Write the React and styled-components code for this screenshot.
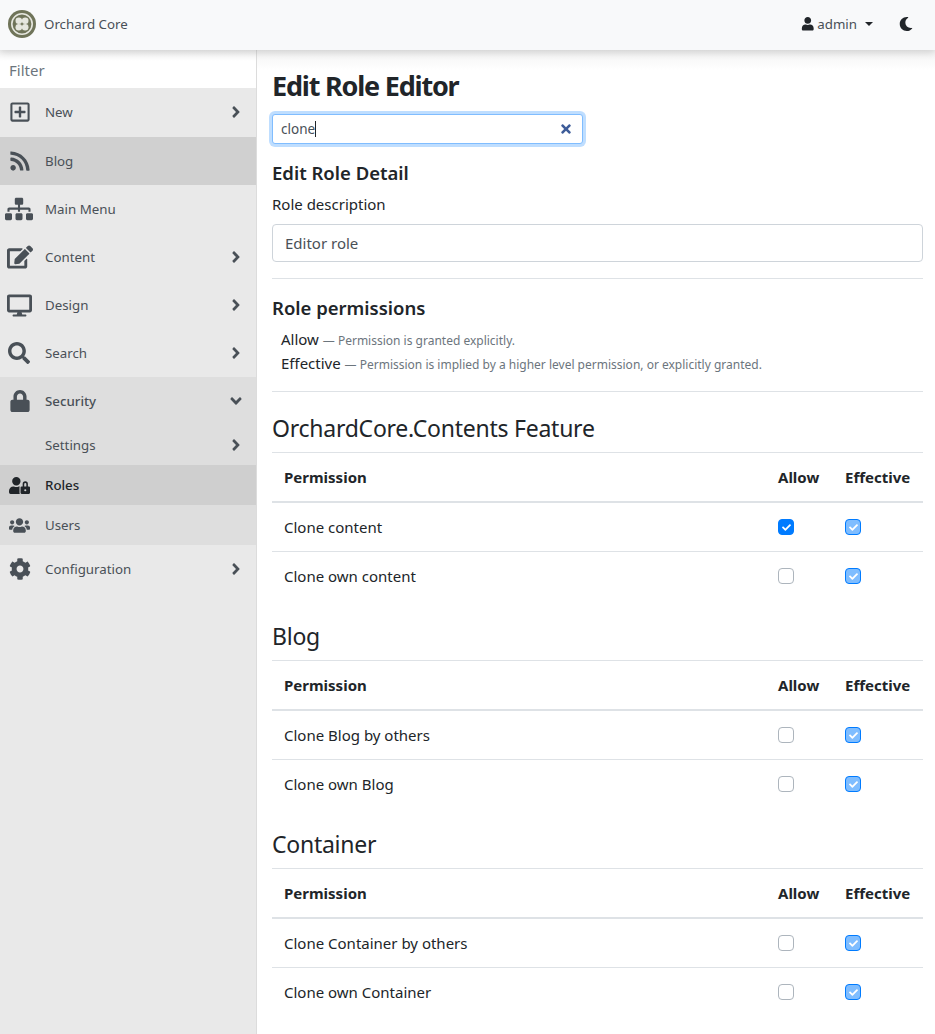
import React from "react";
import styled, { createGlobalStyle } from "styled-components";
import {
  FaRegPlusSquare, FaRss, FaSitemap, FaEdit, FaDesktop, FaSearch, FaLock,
  FaUserLock, FaUsers, FaCog, FaAngleRight, FaAngleDown, FaUser, FaMoon, FaTimes, FaCheck,
} from "react-icons/fa";

const font = `"Noto Sans", "Open Sans", "Liberation Sans", sans-serif`;

const Global = createGlobalStyle`
  html, body { margin: 0; padding: 0; background: #fff; }
  body { font-family: ${font}; color: #212529; font-size: 16px; }
  * { box-sizing: border-box; }
`;

const Page = styled.div`
  width: 935px;
  height: 1034px;
  display: flex;
  flex-direction: column;
  overflow: hidden;
`;

const Navbar = styled.header`
  height: 50px;
  flex: none;
  display: flex;
  align-items: center;
  padding: 0 22px 2px 8px;
  background: #f8f9fa;
  box-shadow: 0 2px 8px rgba(0, 0, 0, 0.16);
  position: relative;
  z-index: 2;
`;

const Brand = styled.div`
  display: flex;
  align-items: center;
  gap: 8px;
  font-size: 13.3px;
  color: #495057;
`;

const NavRight = styled.div`
  margin-left: auto;
  display: flex;
  align-items: center;
  font-size: 13.3px;
  color: #495057;
`;

const UserMenu = styled.div`
  display: flex;
  align-items: center;
  gap: 3px;
  color: #495057;
  svg { color: #212529; font-size: 13.5px; }
`;

const Caret = styled.span`
  width: 0;
  height: 0;
  margin-left: 8px;
  border-top: 4.5px solid #212529;
  border-left: 4.5px solid transparent;
  border-right: 4.5px solid transparent;
`;

const Moon = styled(FaMoon)`
  margin-left: 26px;
  font-size: 14px;
  color: #212529;
`;

const Body = styled.div`
  flex: 1;
  display: flex;
  min-height: 0;
`;

const Sidebar = styled.aside`
  width: 257px;
  flex: none;
  background: #e9e9e9;
  border-right: 1px solid #dcdcdc;
  display: flex;
  flex-direction: column;
`;

const Filter = styled.div`
  height: 38px;
  flex: none;
  padding: 2px 9px 0;
  display: flex;
  align-items: center;
  font-size: 15px;
  color: #6c757d;
  background: linear-gradient(#f3f3f3, #fff 30%);
`;

const Item = styled.div`
  height: ${(p) => p.$h || 48}px;
  flex: none;
  display: flex;
  align-items: center;
  padding-left: ${(p) => (p.$sub ? 45 : 0)}px;
  padding-right: 11px;
  padding-bottom: ${(p) => p.$lift || 0}px;
  font-size: 13.3px;
  color: ${(p) => (p.$dark ? "#212529" : "#495057")};
  font-weight: ${(p) => (p.$semi ? 500 : 400)};
  background: ${(p) => p.$bg || "transparent"};
`;

const IconSlot = styled.span`
  width: 45px;
  flex: none;
  display: flex;
  padding-left: ${(p) => (p.$left ?? 8)}px;
  color: ${(p) => (p.$dark ? "#212529" : "#495057")};
  font-size: ${(p) => p.$size || 22}px;
`;

const Chevron = styled.span`
  margin-left: auto;
  display: flex;
  color: #495057;
  font-size: 18px;
`;

const Group = styled.div`
  background: #dedede;
  display: flex;
  flex-direction: column;
`;

const Main = styled.main`
  flex: 1;
  padding: 15px 12px 0 15px;
  min-width: 0;
  background: linear-gradient(#f3f3f3, #fff 20px);
`;

const Title = styled.h1`
  margin: 0;
  font-size: 27px;
  line-height: 42px;
  font-weight: 700;
  letter-spacing: -1.2px;
  color: #212529;
`;

const SearchBox = styled.div`
  width: 311px;
  height: 30px;
  margin-top: 7px;
  padding: 0 9.5px 0 8px;
  display: flex;
  align-items: center;
  font-size: 13.5px;
  color: #495057;
  background: #fff;
  border: 1px solid #80bdff;
  border-radius: 3px;
  box-shadow: 0 0 0 3px rgba(0, 123, 255, 0.25);
`;

const Cursor = styled.span`
  width: 1px;
  height: 16px;
  background: #212529;
`;

const Clear = styled(FaTimes)`
  margin-left: auto;
  font-size: 14px;
  color: #3d5c99;
`;

const SubHead = styled.h2`
  margin: ${(p) => p.$top}px 0 0;
  font-size: 18.5px;
  line-height: 24px;
  font-weight: 600;
  color: #212529;
`;

const Label = styled.label`
  display: block;
  margin-top: 8px;
  font-size: 15px;
  line-height: 22px;
  color: #212529;
`;

const TextBox = styled.div`
  height: 38px;
  margin-top: 9px;
  padding: 0 12px;
  display: flex;
  align-items: center;
  font-size: 15px;
  color: #495057;
  border: 1px solid #ced4da;
  border-radius: 4px;
`;

const Rule = styled.hr`
  margin: ${(p) => p.$top}px 0 0;
  border: 0;
  border-top: 1px solid #dee2e6;
`;

const Legend = styled.div`
  margin-top: ${(p) => p.$top}px;
  padding-left: 9px;
`;

const LegendLine = styled.div`
  height: 24px;
  line-height: 24px;
  font-size: 15px;
  color: #212529;
  white-space: nowrap;
`;

const Hint = styled.span`
  font-size: 12px;
  color: #6c757d;
`;

const SectionTitle = styled.h3`
  margin: ${(p) => p.$top}px 0 0;
  font-size: 23px;
  line-height: 32px;
  font-weight: 400;
  letter-spacing: -0.25px;
  color: #212529;
`;

const Table = styled.div`
  margin-top: 8px;
  border-top: 1px solid #dee2e6;
`;

const Row = styled.div`
  display: grid;
  grid-template-columns: 1fr 67px 90px;
  align-items: center;
  height: ${(p) => (p.$head ? 50 : 49)}px;
  padding-left: 12px;
  font-size: 15px;
  font-weight: ${(p) => (p.$head ? 700 : 400)};
  color: #212529;
  border-bottom: ${(p) => (p.$head ? "2px" : "1px")} solid ${(p) => (p.$last ? "transparent" : "#dee2e6")};
`;

const Cell = styled.div`
  padding-left: 12px;
  display: flex;
`;

const Check = styled.span`
  width: 16px;
  height: 16px;
  display: flex;
  align-items: center;
  justify-content: center;
  border-radius: 4px;
  border: 1px solid ${(p) => (p.$kind === "off" ? "#adb5bd" : "#007bff")};
  background: ${(p) => (p.$kind === "on" ? "#007bff" : p.$kind === "off" ? "#fff" : "#7fbdff")};
  color: #fff;
  font-size: 9px;
`;

const Logo = () => (
  <svg width="28" height="28" viewBox="0 0 28 28">
    <circle cx="14" cy="14" r="14" fill="#6f7459" />
    <circle cx="14" cy="14" r="10.2" fill="none" stroke="#e6e7df" strokeWidth="1.6" />
    <g fill="#e6e7df">
      <circle cx="10.8" cy="10.8" r="3.3" />
      <circle cx="17.2" cy="10.8" r="3.3" />
      <circle cx="10.8" cy="17.2" r="3.3" />
      <circle cx="17.2" cy="17.2" r="3.3" />
    </g>
  </svg>
);

const NavItem = ({ icon: Icon, label, chevron, bg, size, left, h, semi, dark, open, lift }) => (
  <Item $bg={bg} $h={h} $semi={semi} $dark={dark} $lift={lift}>
    <IconSlot $size={size} $left={left} $dark={dark}><Icon /></IconSlot>
    {label}
    {chevron && <Chevron>{open ? <FaAngleDown /> : <FaAngleRight />}</Chevron>}
  </Item>
);

const sections = [
  { title: "OrchardCore.Contents Feature", top: 20, rows: [["Clone content", "on"], ["Clone own content", "off"]] },
  { title: "Blog", top: 19, rows: [["Clone Blog by others", "off"], ["Clone own Blog", "off"]] },
  { title: "Container", top: 19, rows: [["Clone Container by others", "off"], ["Clone own Container", "off"]] },
];

export default function App() {
  return (
    <Page>
      <Global />
      <Navbar>
        <Brand><Logo />Orchard Core</Brand>
        <NavRight>
          <UserMenu><FaUser />admin</UserMenu>
          <Caret />
          <Moon />
        </NavRight>
      </Navbar>
      <Body>
        <Sidebar>
          <Filter>Filter</Filter>
          <NavItem icon={FaRegPlusSquare} label="New" chevron h={49} lift={1} left={9} />
          <NavItem icon={FaRss} label="Blog" bg="#d0d0d0" left={9} />
          <NavItem icon={FaSitemap} label="Main Menu" size={28} left={5} />
          <NavItem icon={FaEdit} label="Content" chevron size={26} left={7} />
          <NavItem icon={FaDesktop} label="Design" chevron size={25} left={7} />
          <NavItem icon={FaSearch} label="Search" chevron left={8} />
          <Group>
            <NavItem icon={FaLock} label="Security" chevron open semi left={9} />
            <Item $sub $h={40}>Settings<Chevron><FaAngleRight /></Chevron></Item>
            <NavItem icon={FaUserLock} label="Roles" bg="#cfcfcf" dark semi size={21} left={9} h={40} />
            <NavItem icon={FaUsers} label="Users" size={21} left={9} h={40} />
          </Group>
          <NavItem icon={FaCog} label="Configuration" chevron left={9} />
        </Sidebar>
        <Main>
          <Title>Edit Role Editor</Title>
          <SearchBox>clone<Cursor /><Clear /></SearchBox>
          <SubHead $top={17}>Edit Role Detail</SubHead>
          <Label>Role description</Label>
          <TextBox>Editor role</TextBox>
          <Rule $top={16} />
          <SubHead $top={17}>Role permissions</SubHead>
          <Legend $top={7}>
            <LegendLine>Allow <Hint>— Permission is granted explicitly.</Hint></LegendLine>
            <LegendLine>Effective <Hint>— Permission is implied by a higher level permission, or explicitly granted.</Hint></LegendLine>
          </Legend>
          <Rule $top={16} />
          {sections.map((s) => (
            <section key={s.title}>
              <SectionTitle $top={s.top}>{s.title}</SectionTitle>
              <Table>
                <Row $head>
                  <span>Permission</span>
                  <Cell>Allow</Cell>
                  <Cell>Effective</Cell>
                </Row>
                {s.rows.map(([name, allow], i) => (
                  <Row key={name} $last={i === 1}>
                    <span>{name}</span>
                    <Cell><Check $kind={allow}>{allow === "on" && <FaCheck />}</Check></Cell>
                    <Cell><Check $kind="implied"><FaCheck /></Check></Cell>
                  </Row>
                ))}
              </Table>
            </section>
          ))}
        </Main>
      </Body>
    </Page>
  );
}
